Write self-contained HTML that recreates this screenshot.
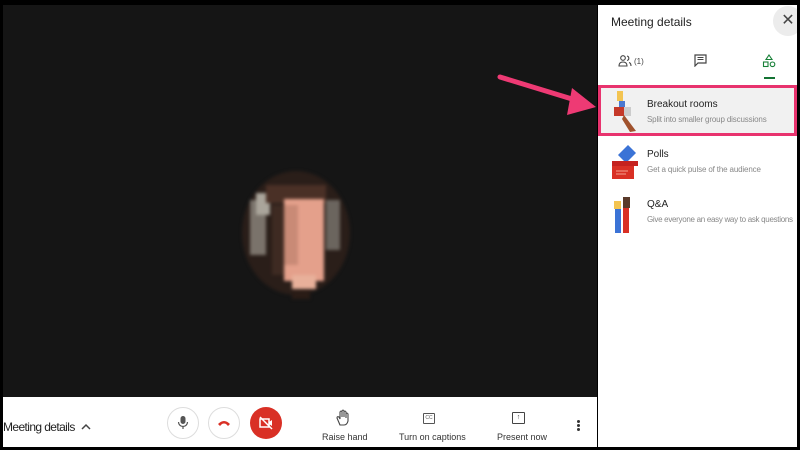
<!DOCTYPE html>
<html><head><meta charset="utf-8"><style>
*{margin:0;padding:0;box-sizing:border-box}
body{width:800px;height:450px;background:#000;position:relative;overflow:hidden;font-family:"Liberation Sans",Arial,sans-serif}
.abs{position:absolute;white-space:nowrap}
#video{left:3px;top:5px;width:594px;height:392px;background:#151515}
#bar{left:3px;top:397px;width:594px;height:50px;background:#fff}
#side{left:598px;top:5px;width:199px;height:442px;background:#fff;overflow:hidden}
.t{font-size:10px;color:#222}
.s{font-size:8px;color:#888;letter-spacing:-0.15px}
.lbl{font-size:9px;color:#333}
</style></head><body>
<div id="video" class="abs"></div>
<svg class="abs" style="left:236px;top:165px;filter:blur(1.5px)" width="124" height="140">
<ellipse cx="60" cy="68" rx="54" ry="62" fill="#2a1e19"/>
<rect x="14" y="35" width="16" height="55" fill="#7a736b"/>
<rect x="20" y="28" width="14" height="22" fill="#aaa59b"/>
<rect x="90" y="35" width="14" height="50" fill="#6b655e"/>
<rect x="30" y="20" width="60" height="18" fill="#4a3026"/>
<rect x="48" y="34" width="40" height="82" fill="#e4a08b"/>
<rect x="48" y="40" width="14" height="60" fill="#c98a76"/>
<rect x="56" y="110" width="24" height="14" fill="#e8b09a"/>
<rect x="56" y="124" width="18" height="10" fill="#2a1c16"/>
<rect x="36" y="40" width="12" height="70" fill="#3e2a22"/>
</svg>
<div id="bar" class="abs">
<div class="abs" style="left:0;top:23px;font-size:12px;color:#222;letter-spacing:-0.6px">Meeting details</div>
<svg class="abs" style="left:78px;top:26px" width="10" height="8"><path d="M1 6 L5 2 L9 6" stroke="#444" stroke-width="1.5" fill="none"/></svg>
<div class="abs" style="left:164px;top:10px;width:32px;height:32px;border:1px solid #ddd;border-radius:50%"></div>
<svg class="abs" style="left:174px;top:18px" width="12" height="16"><rect x="3.5" y="1" width="5" height="8" rx="2.5" fill="#555"/><path d="M1.5 7 a4.5 4.5 0 0 0 9 0 M6 11.5 V14" stroke="#555" stroke-width="1.2" fill="none"/></svg>
<div class="abs" style="left:205px;top:10px;width:32px;height:32px;border:1px solid #ddd;border-radius:50%"></div>
<svg class="abs" style="left:214px;top:22px" width="14" height="8"><path d="M1 5 Q7 -1 13 5 L11 7 L9 5 Q7 4 5 5 L3 7Z" fill="#d93025"/></svg>
<div class="abs" style="left:247px;top:10px;width:32px;height:32px;background:#d93025;border-radius:50%"></div>
<svg class="abs" style="left:255px;top:18px" width="16" height="16"><rect x="2" y="4" width="9" height="8" fill="none" stroke="#fff" stroke-width="1.5"/><path d="M11 7 L14 5 V11 L11 9" fill="#fff"/><path d="M2 2 L14 14" stroke="#fff" stroke-width="1.5"/></svg>
<svg class="abs" style="left:333px;top:12px" width="14" height="18"><path d="M4 16 L1 9 Q1 7 3 8 L4 10 V3 Q5 1 6 3 V8 V2 Q7 0 8 2 V8 V3 Q9 1 10 3 V9 V5 Q11 3 12 5 V12 Q11 16 8 16Z" fill="none" stroke="#444" stroke-width="1.1"/></svg>
<div class="abs lbl" style="left:319px;top:35px">Raise hand</div>
<div class="abs" style="left:420px;top:16px;width:12px;height:11px;border:1px solid #555;border-radius:1px;font-size:5px;color:#555;text-align:center;line-height:9px">CC</div>
<div class="abs lbl" style="left:396px;top:35px">Turn on captions</div>
<div class="abs" style="left:509px;top:15px;width:13px;height:12px;border:1.2px solid #444;border-radius:1px;font-size:7px;color:#444;text-align:center;line-height:10px">↑</div>
<div class="abs lbl" style="left:494px;top:35px">Present now</div>
<div class="abs" style="left:574px;top:23px;width:3px;height:3px;background:#333;border-radius:50%;box-shadow:0 4px #333,0 8px #333"></div>
</div>
<div id="side" class="abs">
<div class="abs" style="left:13px;top:10px;font-size:12px;color:#222">Meeting details</div>
<div class="abs" style="left:175px;top:1px;width:30px;height:30px;background:#ececec;border-radius:50%;font-size:16px;color:#444;text-align:center;line-height:30px">✕</div>
<svg class="abs" style="left:20px;top:50px" width="14" height="12"><circle cx="5" cy="3" r="2.3" fill="none" stroke="#444" stroke-width="1.1"/><path d="M1 11 Q1 7 5 7 Q9 7 9 11Z" fill="none" stroke="#444" stroke-width="1.1"/><path d="M9 1 A2.3 2.3 0 0 1 9 5.5 M11 7.5 Q13 8 13 11" stroke="#444" stroke-width="1.1" fill="none"/></svg>
<div class="abs" style="left:36px;top:52px;font-size:8px;color:#444">(1)</div>
<svg class="abs" style="left:96px;top:49px" width="13" height="13"><path d="M1 1 H12 V9 H4 L1 12Z" fill="none" stroke="#444" stroke-width="1.2"/><path d="M3.5 3.5 H9.5 M3.5 5.5 H9.5" stroke="#444"/></svg>
<svg class="abs" style="left:164px;top:49px" width="14" height="14"><path d="M7 1 L10 5.5 H4Z" fill="none" stroke="#188038" stroke-width="1.1"/><rect x="1.5" y="8" width="4.5" height="4.5" fill="none" stroke="#188038" stroke-width="1.1"/><circle cx="10.5" cy="10.3" r="2.3" fill="none" stroke="#188038" stroke-width="1.1"/></svg>
<div class="abs" style="left:166px;top:72px;width:11px;height:2px;background:#137333"></div>
<div class="abs" style="left:0;top:80px;width:199px;height:51px;background:#f1f1f1;border:3px solid #e8336e"></div>
<svg class="abs" style="left:14px;top:86px" width="30" height="42"><rect x="5" y="0" width="6" height="10" fill="#f3c451"/><rect x="7" y="10" width="6" height="8" fill="#4a78d0"/><rect x="2" y="16" width="10" height="9" fill="#c53929"/><rect x="12" y="16" width="7" height="9" fill="#ccc"/><path d="M12 24 L24 40 L18 41 L10 28Z" fill="#a0522d"/></svg>
<div class="abs t" style="left:49px;top:94px">Breakout rooms</div>
<div class="abs s" style="left:49px;top:110px">Split into smaller group discussions</div>
<svg class="abs" style="left:12px;top:138px" width="30" height="42"><path d="M8 12 L18 2 L26 10 L16 20Z" fill="#3b73d6"/><rect x="2" y="22" width="22" height="14" fill="#d93025"/><rect x="2" y="18" width="26" height="5" fill="#c5221f"/><path d="M6 28 H18 M6 31 H16" stroke="#f4a08f"/></svg>
<div class="abs t" style="left:49px;top:144px">Polls</div>
<div class="abs s" style="left:49px;top:160px">Get a quick pulse of the audience</div>
<svg class="abs" style="left:12px;top:190px" width="30" height="42"><rect x="5" y="12" width="6" height="26" fill="#3b73d6"/><rect x="4" y="6" width="7" height="8" fill="#f3c451"/><rect x="13" y="12" width="6" height="26" fill="#d93025"/><rect x="13" y="2" width="7" height="11" fill="#5a3a2a"/></svg>
<div class="abs t" style="left:49px;top:194px">Q&amp;A</div>
<div class="abs s" style="left:49px;top:210px;letter-spacing:-0.3px">Give everyone an easy way to ask questions</div>
</div>
<svg class="abs" style="left:490px;top:65px" width="110" height="60"><path d="M10 12 L82 34" stroke="#ee3a74" stroke-width="5" stroke-linecap="round"/><path d="M82 23 L106 42 L77 50Z" fill="#ee3a74"/></svg>
</body></html>
